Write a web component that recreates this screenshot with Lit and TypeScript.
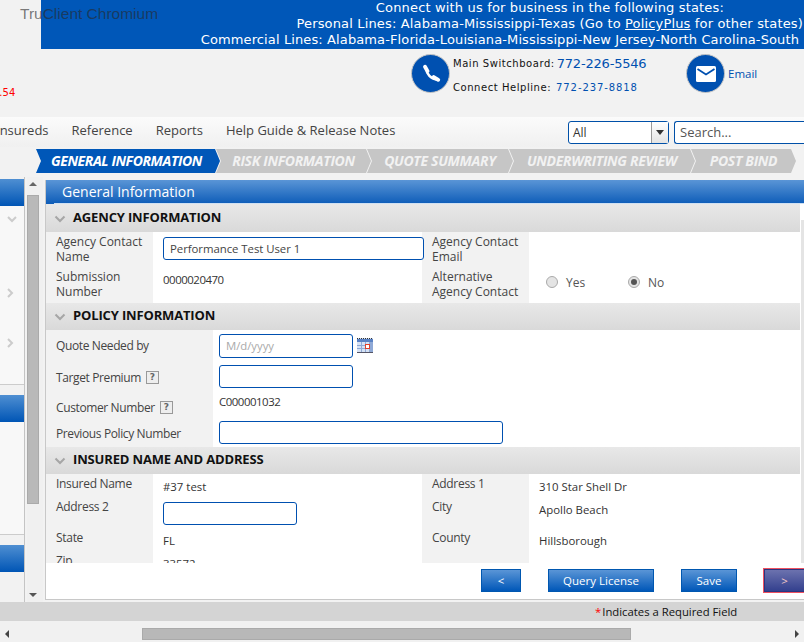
import { LitElement, html, css, svg } from "lit";
import { customElement } from "lit/decorators.js";

const chevDown = svg`<svg class="chev" width="12" height="8" viewBox="0 0 12 8"><path d="M1.500 1.500 6 6l4.500-4.500" fill="none" stroke="#a6a6a6" stroke-width="2"/></svg>`;

const helpIcon = html`<span class="help">?</span>`;

@customElement("app-root")
export class AppRoot extends LitElement {
  static styles = css`
    :host {
      display: block;
      width: 804px;
      height: 642px;
      overflow: hidden;
      position: relative;
      background: #f2f2f2;
      font-family: "Open Sans", "Liberation Sans", sans-serif;
      font-size: 12px;
      color: #333;
    }
    .app-title {
      position: absolute;
      left: 20px;
      top: 5px;
      font: 15.500px "Liberation Sans", sans-serif;
      color: rgba(40, 40, 40, 0.62);
      z-index: 2;
    }
    .banner {
      margin-left: 41px;
      height: 49px;
      background: #0057b8;
      color: #fff;
      font: 13px/16px "DejaVu Sans", sans-serif;
      text-align: right;
      white-space: nowrap;
      overflow: hidden;
      box-sizing: border-box;
    }
    .banner .l1 { padding-right: 80px; letter-spacing: 0.16px; }
    .banner .l2 { padding-right: 1px; letter-spacing: 0.155px; }
    .banner .l3 { padding-right: 5px; letter-spacing: 0.115px; }
    .banner u { text-decoration: underline; }
    .contact {
      height: 68px;
      position: relative;
      display: grid;
      grid-template-columns: 411px 275px 39px 50px;
      padding-top: 5px;
      box-sizing: border-box;
    }
    .red {
      position: absolute;
      left: -7px;
      top: 38px;
      color: #f00;
      font: 10px "DejaVu Sans", sans-serif;
    }
    .round {
      width: 39px;
      height: 39px;
      border-radius: 50%;
      background: #0050b0;
      border: 1px solid #c4c4c4;
      box-sizing: border-box;
      display: flex;
      align-items: center;
      justify-content: center;
    }
    .phones { display: flex; align-items: flex-start; }
    .phone-lines {
      margin-left: 3px;
      font: 10px "DejaVu Sans", sans-serif;
      color: #111;
      letter-spacing: 0.55px;
    }
    .phone-lines .r1 { height: 19px; display: flex; align-items: center; gap: 2px; }
    .phone-lines .r2 { height: 28px; display: flex; align-items: center; gap: 5px; }
    .big { font-size: 13px; color: #0050b0; letter-spacing: -0.2px; }
    .mid { font-size: 10px; color: #0050b0; letter-spacing: 0.9px; }
    .email-link { color: #0050b0; font-size: 11.500px; padding: 12px 0 0 3px; }
    .nav {
      height: 30px;
      background: linear-gradient(#fbfbfb, #f0f0f0);
      display: flex;
      align-items: center;
      font-size: 13px;
      color: #444;
      position: relative;
    }
    .nav .links {
      display: flex;
      gap: 23px;
      margin-left: -4px;
      padding-bottom: 4px;
      white-space: nowrap;
      flex: 1;
    }
    .combo {
      width: 101px;
      height: 23px;
      box-sizing: border-box;
      border: 1px solid #0050a8;
      border-radius: 3px;
      background: #fff;
      display: flex;
      align-items: center;
      margin-right: 5px;
      color: #333;
      font-size: 12px;
      padding-left: 4px;
    }
    .combo span { flex: 1; }
    .combo i {
      width: 17px;
      height: 21px;
      background: linear-gradient(#fff, #e4e4e4);
      border-left: 1px solid #999;
      display: flex;
      align-items: center;
      justify-content: center;
      box-sizing: border-box;
    }
    .combo i::after {
      content: "";
      border: 4px solid transparent;
      border-top: 5px solid #333;
      border-bottom: 0;
    }
    .search {
      width: 140px;
      height: 23px;
      box-sizing: border-box;
      border: 1px solid #0050a8;
      border-radius: 3px 0 0 3px;
      border-right: 0;
      margin-right: -10px;
      background: #fff;
      color: #555;
      padding: 0 0 0 5px;
      line-height: 20px;
    }
    .steps {
      height: 24px;
      margin-top: 2px;
      display: flex;
      padding-left: 36px;
    }
    .step {
      height: 24px;
      background: #c6c6c6;
      color: #f2f2f2;
      font: italic 700 14px/24px "Open Sans", sans-serif;
      letter-spacing: -0.32px;
      white-space: nowrap;
      text-align: center;
      box-sizing: border-box;
      margin-right: -4px;
      clip-path: polygon(0 0, calc(100% - 5px) 0, 100% 50%, calc(100% - 5px) 100%, 0 100%, 5px 50%);
    }
    .step.on { background: #0057b8; color: #fff; letter-spacing: -0.4px; padding-right: 3px; }
    .main {
      position: absolute;
      top: 177px;
      left: 0;
      right: 0;
      height: 425px;
      display: flex;
    }
    .side {
      width: 25px;
      flex: none;
      border-right: 1px solid #c4c4c4;
      box-sizing: border-box;
      padding-top: 2px;
      display: flex;
      flex-direction: column;
    }
    .side-head { height: 27px; background: linear-gradient(#4f8fd2, #0055b5); flex: none; }
    .side-body {
      background: #f8f8f8;
      border-bottom: 1px solid #ccc;
      flex: none;
      position: relative;
      margin-bottom: 10px;
    }
    .side-body svg { position: absolute; left: 7px; }
    .vscroll {
      width: 16px;
      flex: none;
      margin-left: 2px;
      position: relative;
      background: #f0f0f0;
    }
    .vthumb {
      position: absolute;
      left: 0;
      top: 18px;
      width: 12px;
      height: 309px;
      background: #b9b9b9;
      border: 1px solid #aaa;
      box-sizing: border-box;
    }
    .arrow-up, .arrow-down {
      position: absolute;
      left: 2px;
      width: 0;
      height: 0;
      border: 4px solid transparent;
    }
    .arrow-up { top: 5px; border-top: 0; border-bottom: 4px solid #666; }
    .arrow-down { bottom: 5px; border-bottom: 0; border-top: 4px solid #555; }
    .panel {
      margin-left: 2px;
      flex: 1;
      min-width: 0;
      margin-top: 3px;
      height: 419px;
      background: #fff;
      border-left: 1px solid #c8c8c8;
      border-bottom: 1px solid #c8c8c8;
      display: flex;
      flex-direction: column;
    }
    .panel-head {
      height: 24px;
      flex: none;
      background: linear-gradient(#5a95d6, #0d5cb8);
      position: relative;
      color: #fff;
      font-size: 14px;
      line-height: 23px;
      padding-left: 16px;
    }
    .panel-head::after {
      content: "";
      position: absolute;
      left: 8px;
      right: 0;
      bottom: 0;
      height: 1px;
      background: #cfe0f2;
    }
    .scroll {
      height: 359px;
      flex: none;
      overflow: hidden;
      position: relative;
    }
    .inner-bar {
      position: absolute;
      right: 0;
      top: 16px;
      bottom: 0;
      width: 3px;
      background: #e4e4e4;
    }
    .section {
      height: 28px;
      background: linear-gradient(#e8e8e8, #d9d9d9);
      margin-right: 4px;
      display: flex;
      align-items: center;
      color: #111;
      font-size: 13px;
      font-weight: 700;
      letter-spacing: -0.15px;
      box-sizing: border-box;
      padding-bottom: 2px;
    }
    .section.short { height: 27px; padding-bottom: 3px; }
    .section .chev { margin: 4px 7px 0 8px; }
    .grid4 {
      display: grid;
      grid-template-columns: 107px 269px 107px 1fr;
      margin-right: 4px;
    }
    .agency { grid-template-rows: 35px 36px; }
    .insured { grid-template-rows: 23px 31px 25px 30px; }
    .lbl {
      background: #f2f2f2;
      padding-left: 10px;
      line-height: 15px;
      color: #444;
      box-sizing: border-box;
    }
    .insured .lbl { letter-spacing: -0.3px; }
    .val { padding-left: 10px; color: #333; line-height: 15px; font-size: 11.400px; }
    .num { letter-spacing: -0.45px; }
    .in {
      display: block;
      position: relative;
      z-index: 1;
      box-sizing: border-box;
      height: 23px;
      border: 1px solid #0050b0;
      border-radius: 3px;
      background: #fff;
      color: #444;
      line-height: 21px;
      padding-left: 6px;
      letter-spacing: -0.05px;
    }
    .in.tall { height: 24px; }
    .w134 { width: 134px; }
    .w261 { width: 261px; }
    .w284 { width: 284px; }
    .pt2 { padding-top: 2px; }
    .pt3 { padding-top: 3px; }
    .pt5 { padding-top: 5px; }
    .pt6 { padding-top: 6px; }
    .radios {
      display: flex;
      align-items: center;
      padding: 0 0 6px 17px;
    }
    .radio { display: flex; align-items: center; gap: 8px; width: 82px; color: #555; font-size: 12px; }
    .radio b {
      width: 12px;
      height: 12px;
      border-radius: 50%;
      border: 1px solid #aaa;
      background: #e4e4e4;
      box-sizing: border-box;
      display: flex;
      align-items: center;
      justify-content: center;
    }
    .radio b.sel::after {
      content: "";
      width: 6px;
      height: 6px;
      border-radius: 50%;
      background: #555;
    }
    .grid2 {
      display: grid;
      grid-template-columns: 167px 1fr;
      grid-template-rows: 31px 30px 30px 26px;
      margin-right: 4px;
    }
    .grid2 .lbl { display: flex; align-items: center; gap: 5px; letter-spacing: -0.38px; }
    .grid2 .val { padding-left: 6px; display: flex; align-items: center; gap: 4px; }
    .grid2 .val.top { align-items: flex-start; }
    .grid2 .val.high { padding-bottom: 10px; box-sizing: border-box; }
    .grid2 .lbl.up { padding-bottom: 2px; }
    .grid2 .lbl.down { padding-top: 2px; }
    .help {
      width: 13px;
      height: 13px;
      box-sizing: border-box;
      border: 1px solid #999;
      background: #eee;
      color: #666;
      font: 700 9px/11px "DejaVu Sans", sans-serif;
      letter-spacing: 0;
      text-align: center;
    }
    .placeholder { color: #aaa; }
    .actions {
      height: 36px;
      flex: none;
      display: flex;
      align-items: flex-start;
      padding-top: 6px;
      box-sizing: border-box;
    }
    .btn {
      height: 23px;
      box-sizing: border-box;
      background: linear-gradient(#5a95d6, #0057b8);
      border: 1px solid #0057b0;
      color: #fff;
      font-size: 11.500px;
      display: flex;
      align-items: center;
      justify-content: center;
      flex: none;
    }
    .btn.focus {
      background: linear-gradient(#6c72ae, #33408e);
      border: 1px solid #2a3580;
      box-shadow: 0 0 0 1px #ee5060;
      color: #f5c8c8;
    }
    .legend {
      position: absolute;
      left: 0;
      right: 0;
      top: 602px;
      height: 19px;
      background: #d4d4d4;
      color: #111;
      font-size: 11.300px;
      line-height: 19px;
      padding-left: 595px;
      box-sizing: border-box;
      display: flex;
      gap: 1px;
    }
    .legend em { color: #f00; font-style: normal; }
    .hscroll {
      position: absolute;
      left: 0;
      right: 0;
      top: 621px;
      height: 21px;
      background: #f1f1f1;
    }
    .hthumb {
      position: absolute;
      left: 142px;
      width: 489px;
      top: 7px;
      height: 12px;
      background: #b8b8b8;
      border: 1px solid #aaa;
      box-sizing: border-box;
    }
    .hl, .hr {
      position: absolute;
      top: 9px;
      width: 0;
      height: 0;
      border: 4px solid transparent;
    }
    .hl { left: 5px; border-left: 0; border-right: 4px solid #444; }
    .hr { right: 5px; border-right: 0; border-left: 4px solid #444; }
  `;

  render() {
    return html`
      <div class="app-title">TruClient Chromium</div>
      <div class="banner">
        <div class="l1">Connect with us for business in the following states:</div>
        <div class="l2">Personal Lines: Alabama-Mississippi-Texas (Go to <u>PolicyPlus</u> for other states)</div>
        <div class="l3">Commercial Lines: Alabama-Florida-Louisiana-Mississippi-New Jersey-North Carolina-South</div>
      </div>
      <div class="contact">
        <span class="red">1.54</span>
        <div></div>
        <div class="phones">
          <div class="round">
            <svg width="20" height="20" viewBox="0 0 24 24" fill="none" stroke="#fff" stroke-linecap="round">
              <path d="M6.500 6C6.500 12 12 18 18.500 18.500" stroke-width="3"/>
              <path d="M4.800 3.300 7.800 8.600" stroke-width="4.600"/>
              <path d="M15.300 15.700 20.700 19" stroke-width="4.600"/>
            </svg>
          </div>
          <div class="phone-lines">
            <div class="r1">Main Switchboard: <span class="big">772-226-5546</span></div>
            <div class="r2">Connect Helpline: <span class="mid">772-237-8818</span></div>
          </div>
        </div>
        <div class="round">
          <svg width="22" height="18" viewBox="0 0 22 18"><rect width="20" height="16" x="1" y="1" rx="1.500" fill="#fff"/><path d="M2.500 4 11 9.500 19.500 4" fill="none" stroke="#0050b0" stroke-width="1.800"/></svg>
        </div>
        <div class="email-link">Email</div>
      </div>
      <div class="nav">
        <div class="links"><span>Insureds</span><span>Reference</span><span>Reports</span><span>Help Guide &amp; Release Notes</span></div>
        <div class="combo"><span>All</span><i></i></div>
        <div class="search">Search...</div>
      </div>
      <div class="steps">
        <div class="step on" style="width:184px">GENERAL INFORMATION</div>
        <div class="step" style="width:155px">RISK INFORMATION</div>
        <div class="step" style="width:146px">QUOTE SUMMARY</div>
        <div class="step" style="width:186px">UNDERWRITING REVIEW</div>
        <div class="step" style="width:105px">POST BIND</div>
      </div>
      <div class="main">
        <div class="side">
          <div class="side-head"></div>
          <div class="side-body" style="height:178px">
            <svg style="top:10px" width="10" height="7" viewBox="0 0 10 7"><path d="M1 1l4 4 4-4" fill="none" stroke="#ccc" stroke-width="2"/></svg>
            <svg style="top:82px" width="7" height="10" viewBox="0 0 7 10"><path d="M1 1l4 4-4 4" fill="none" stroke="#ccc" stroke-width="2"/></svg>
            <svg style="top:132px" width="7" height="10" viewBox="0 0 7 10"><path d="M1 1l4 4-4 4" fill="none" stroke="#ccc" stroke-width="2"/></svg>
          </div>
          <div class="side-head"></div>
          <div class="side-body" style="height:112px"></div>
          <div class="side-head"></div>
        </div>
        <div class="vscroll"><i class="arrow-up"></i><div class="vthumb"></div><i class="arrow-down"></i></div>
        <div class="panel">
          <div class="panel-head">General Information</div>
          <div class="scroll">
            <div class="section">${chevDown}AGENCY INFORMATION</div>
            <div class="grid4 agency">
              <div class="lbl pt2">Agency Contact<br />Name</div>
              <div class="val pt5"><span class="in w261">Performance Test User 1</span></div>
              <div class="lbl pt2">Agency Contact<br />Email</div>
              <div></div>
              <div class="lbl pt2">Submission<br />Number</div>
              <div class="val pt5 num">0000020470</div>
              <div class="lbl pt2">Alternative<br />Agency Contact</div>
              <div class="radios">
                <span class="radio"><b></b>Yes</span>
                <span class="radio"><b class="sel"></b>No</span>
              </div>
            </div>
            <div class="section short">${chevDown}POLICY INFORMATION</div>
            <div class="grid2">
              <div class="lbl">Quote Needed by</div>
              <div class="val">
                <span class="in tall placeholder w134">M/d/yyyy</span>
                <svg width="16" height="15" viewBox="0 0 16 15" shape-rendering="crispEdges">
                  <rect width="16" height="15" fill="#d6e2f4"/>
                  <path d="M0 .5h16" stroke="#333" stroke-dasharray="1 1"/>
                  <rect y="1" width="16" height="3" fill="#5a82c4"/>
                  <path d="M0 7.500h16M0 10.500h16M4.500 4v10M8.500 4v10M12.500 4v10" stroke="#8fa9d6"/>
                  <rect x="13" y="4" width="3" height="10" fill="#8fa9d6"/>
                  <rect y="14" width="16" height="1" fill="#556"/>
                  <rect x="8.500" y="6.500" width="4" height="4" fill="#fff" stroke="#e0402a"/>
                </svg>
              </div>
              <div class="lbl down">Target Premium ${helpIcon}</div>
              <div class="val"><span class="in w134">&nbsp;</span></div>
              <div class="lbl pt2">Customer Number ${helpIcon}</div>
              <div class="val high num">C000001032</div>
              <div class="lbl up">Previous Policy Number</div>
              <div class="val top"><span class="in w284">&nbsp;</span></div>
            </div>
            <div class="section short">${chevDown}INSURED NAME AND ADDRESS</div>
            <div class="grid4 insured">
              <div class="lbl pt2">Insured Name</div>
              <div class="val pt5">#37 test</div>
              <div class="lbl pt2">Address 1</div>
              <div class="val pt5">310 Star Shell Dr</div>
              <div class="lbl pt2">Address 2</div>
              <div class="val pt5"><span class="in w134">&nbsp;</span></div>
              <div class="lbl pt2">City</div>
              <div class="val pt5">Apollo Beach</div>
              <div class="lbl pt2">State</div>
              <div class="val pt5">FL</div>
              <div class="lbl pt2">County</div>
              <div class="val pt5">Hillsborough</div>
              <div class="lbl">Zip</div>
              <div class="val pt3">33572</div>
              <div class="lbl"></div>
              <div></div>
            </div>
            <div class="inner-bar"></div>
          </div>
          <div class="actions">
            <div class="btn" style="width:40px;margin-left:435px">&lt;</div>
            <div class="btn" style="width:106px;margin-left:27px">Query License</div>
            <div class="btn" style="width:56px;margin-left:27px">Save</div>
            <div class="btn focus" style="width:41px;margin-left:27px">&gt;</div>
          </div>
        </div>
      </div>
      <div class="legend"><em>*</em><span>Indicates a Required Field</span></div>
      <div class="hscroll"><i class="hl"></i><div class="hthumb"></div><i class="hr"></i></div>
    `;
  }
}
